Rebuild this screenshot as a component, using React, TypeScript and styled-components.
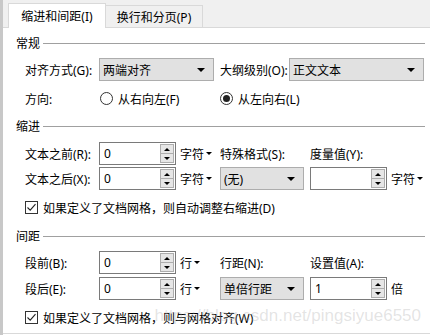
import React from "react";
import styled, { createGlobalStyle } from "styled-components";

const Global = createGlobalStyle`
  html, body { margin: 0; padding: 0; background: #fff; }
  body {
    font-family: "Noto Sans", "Noto Sans CJK SC", sans-serif;
    font-size: 12px;
    color: #000;
  }
`;

const Page = styled.div`
  position: relative;
  width: 430px;
  height: 335px;
  box-sizing: border-box;
  border-left: 3px solid #c8c8c8;
  background: #fff;
  overflow: hidden;
`;

const TabBar = styled.div`
  height: 28px;
  box-sizing: border-box;
  background: #f0f0f0;
  border-bottom: 1px solid #d9d9d9;
  display: flex;
  align-items: flex-end;
  padding-left: 5px;
`;

const Tab = styled.div<{ $active?: boolean }>`
  box-sizing: border-box;
  display: flex;
  align-items: center;
  justify-content: center;
  width: ${(p) => (p.$active ? 98 : 97)}px;
  height: ${(p) => (p.$active ? 25 : 22)}px;
  margin-bottom: ${(p) => (p.$active ? -1 : 0)}px;
  background: ${(p) => (p.$active ? "#fff" : "#f0f0f0")};
  border: 1px solid #d9d9d9;
  border-bottom: none;
  ${(p) => (!p.$active ? "border-left: none;" : "")}
  white-space: nowrap;
`;

const Panel = styled.div`
  height: 306px;
  box-sizing: border-box;
  padding: 5px 5px 0 13px;
  border-bottom: 1px solid #d9d9d9;
  display: flex;
  flex-direction: column;
`;

const SectionTitle = styled.div<{ $mt?: number }>`
  display: flex;
  align-items: center;
  height: 20px;
  margin-top: ${(p) => p.$mt ?? 0}px;
  gap: 3px;
  white-space: nowrap;
  &::after {
    content: "";
    flex: 1;
    height: 1px;
    background: #a0a0a0;
  }
`;

const Row = styled.div<{ $mt: number }>`
  display: flex;
  align-items: center;
  height: 23px;
  margin-top: ${(p) => p.$mt}px;
  padding-left: 9px;
  white-space: nowrap;
`;

const Label = styled.span<{ $w: number; $ml?: number }>`
  width: ${(p) => p.$w}px;
  margin-left: ${(p) => p.$ml ?? 0}px;
  flex: none;
`;

const Select = styled.div<{ $w: number; $ml?: number }>`
  position: relative;
  box-sizing: border-box;
  width: ${(p) => p.$w}px;
  margin-left: ${(p) => p.$ml ?? 0}px;
  height: 23px;
  flex: none;
  background: #e1e1e1;
  border: 1px solid #adadad;
  padding-left: 3px;
  display: flex;
  align-items: center;
`;

const DropArrow = styled.span`
  margin-left: auto;
  margin-right: 8px;
  width: 0;
  height: 0;
  border-left: 4px solid transparent;
  border-right: 4px solid transparent;
  border-top: 4px solid #000;
`;

const NumBox = styled.div<{ $ml?: number }>`
  box-sizing: border-box;
  width: 77px;
  height: 23px;
  flex: none;
  margin-left: ${(p) => p.$ml ?? 0}px;
  border: 1px solid #7a7a7a;
  background: #fff;
  display: flex;
  align-items: center;
  padding-left: 4px;
`;

const Spinner = styled.div`
  margin-left: auto;
  margin-right: 1px;
  box-sizing: border-box;
  width: 14px;
  height: 19px;
  border: 1px solid #adadad;
  background: #e6e6e6;
  display: flex;
  flex-direction: column;
`;

const SpinHalf = styled.div<{ $down?: boolean }>`
  flex: 1;
  display: flex;
  align-items: center;
  justify-content: center;
  ${(p) => (p.$down ? "border-top: 1px solid #adadad;" : "")}
  &::before {
    content: "";
    width: 0;
    height: 0;
    border-left: 3px solid transparent;
    border-right: 3px solid transparent;
    ${(p) =>
      p.$down ? "border-top: 3px solid #000;" : "border-bottom: 3px solid #000;"}
  }
`;

const Unit = styled.span<{ $w?: number }>`
  box-sizing: border-box;
  width: ${(p) => (p.$w ? `${p.$w}px` : "auto")};
  flex: none;
  padding-left: 4px;
  display: flex;
  align-items: center;
  gap: 2px;
`;

const UnitArrow = styled.span`
  width: 0;
  height: 0;
  border-left: 3px solid transparent;
  border-right: 3px solid transparent;
  border-top: 3px solid #000;
`;

const RadioItem = styled.label<{ $w?: number }>`
  display: flex;
  align-items: center;
  gap: 5px;
  width: ${(p) => (p.$w ? `${p.$w}px` : "auto")};
  flex: none;
`;

const RadioCircle = styled.span<{ $checked?: boolean }>`
  box-sizing: border-box;
  width: 13px;
  height: 13px;
  border-radius: 50%;
  border: 1px solid #333;
  background: #fff;
  display: flex;
  align-items: center;
  justify-content: center;
  &::after {
    content: "";
    width: 7px;
    height: 7px;
    border-radius: 50%;
    background: ${(p) => (p.$checked ? "#222" : "transparent")};
  }
`;

const CheckItem = styled.label`
  display: flex;
  align-items: center;
  gap: 5px;
`;

const CheckBox = styled.span`
  box-sizing: border-box;
  width: 13px;
  height: 13px;
  border: 1px solid #333;
  background: #fff;
  display: flex;
  align-items: center;
  justify-content: center;
`;

const Watermark = styled.div`
  position: absolute;
  right: 9px;
  bottom: 11px;
  font-family: "Liberation Sans", Arial, sans-serif;
  font-size: 17px;
  line-height: 1;
  color: rgba(170, 170, 170, 0.33);
  pointer-events: none;
  white-space: nowrap;
`;

const Check = () => (
  <CheckBox>
    <svg width="11" height="11" viewBox="0 0 11 11">
      <path d="M1.5 5.5 L4.2 8.2 L9.5 2.2" fill="none" stroke="#222" strokeWidth="1.1" />
    </svg>
  </CheckBox>
);

const Num = ({ value, ml }: { value: string; ml?: number }) => (
  <NumBox $ml={ml}>
    {value}
    <Spinner>
      <SpinHalf />
      <SpinHalf $down />
    </Spinner>
  </NumBox>
);

const UnitDrop = ({ text, w }: { text: string; w?: number }) => (
  <Unit $w={w}>
    {text}
    <UnitArrow />
  </Unit>
);

export default function App() {
  return (
    <>
      <Global />
      <Page>
        <TabBar>
          <Tab $active>缩进和间距(I)</Tab>
          <Tab>换行和分页(P)</Tab>
        </TabBar>
        <Panel>
          <SectionTitle>常规</SectionTitle>
          <Row $mt={5}>
            <Label $w={74}>对齐方式(G):</Label>
            <Select $w={115}>
              两端对齐
              <DropArrow />
            </Select>
            <Label $w={69} $ml={6}>大纲级别(O):</Label>
            <Select $w={135}>
              正文文本
              <DropArrow />
            </Select>
          </Row>
          <Row $mt={6}>
            <Label $w={75}>方向:</Label>
            <RadioItem $w={120}>
              <RadioCircle />
              从右向左(F)
            </RadioItem>
            <RadioItem>
              <RadioCircle $checked />
              从左向右(L)
            </RadioItem>
          </Row>

          <SectionTitle $mt={6}>缩进</SectionTitle>
          <Row $mt={6}>
            <Label $w={74}>文本之前(R):</Label>
            <Num value="0" />
            <UnitDrop text="字符" w={44} />
            <Label $w={90}>特殊格式(S):</Label>
            <Label $w={80}>度量值(Y):</Label>
          </Row>
          <Row $mt={2}>
            <Label $w={74}>文本之后(X):</Label>
            <Num value="0" />
            <UnitDrop text="字符" w={44} />
            <Select $w={84}>
              (无)
              <DropArrow />
            </Select>
            <Num value="" ml={6} />
            <UnitDrop text="字符" />
          </Row>
          <Row $mt={6}>
            <CheckItem>
              <Check />
              如果定义了文档网格，则自动调整右缩进(D)
            </CheckItem>
          </Row>

          <SectionTitle $mt={7}>间距</SectionTitle>
          <Row $mt={5}>
            <Label $w={74}>段前(B):</Label>
            <Num value="0" />
            <UnitDrop text="行" w={44} />
            <Label $w={90}>行距(N):</Label>
            <Label $w={80}>设置值(A):</Label>
          </Row>
          <Row $mt={3}>
            <Label $w={74}>段后(E):</Label>
            <Num value="0" />
            <UnitDrop text="行" w={44} />
            <Select $w={84}>
              单倍行距
              <DropArrow />
            </Select>
            <Num value="1" ml={6} />
            <Unit>倍</Unit>
          </Row>
          <Row $mt={6}>
            <CheckItem>
              <Check />
              如果定义了文档网格，则与网格对齐(W)
            </CheckItem>
          </Row>
        </Panel>
        <Watermark>https://blog.csdn.net/pingsiyue6550</Watermark>
      </Page>
    </>
  );
}
